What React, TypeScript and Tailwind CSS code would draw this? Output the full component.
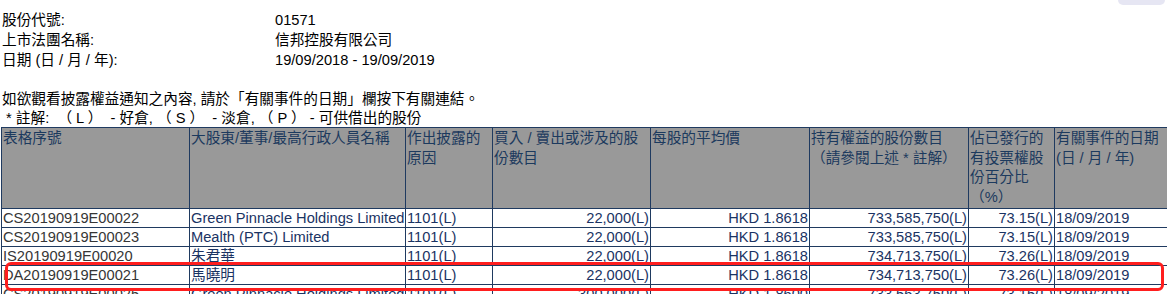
import React from "react";

const font = { fontFamily: '"Liberation Sans", Arial, "Noto Sans CJK TC", sans-serif' };

type Row = [string, string, string, string, string, string, string, string];

const rows: Row[] = [
  ["CS20190919E00022", "Green Pinnacle Holdings Limited", "1101(L)", "22,000(L)", "HKD 1.8618", "733,585,750(L)", "73.15(L)", "18/09/2019"],
  ["CS20190919E00023", "Mealth (PTC) Limited", "1101(L)", "22,000(L)", "HKD 1.8618", "733,585,750(L)", "73.15(L)", "18/09/2019"],
  ["IS20190919E00020", "朱君華", "1101(L)", "22,000(L)", "HKD 1.8618", "734,713,750(L)", "73.26(L)", "18/09/2019"],
  ["DA20190919E00021", "馬曉明", "1101(L)", "22,000(L)", "HKD 1.8618", "734,713,750(L)", "73.26(L)", "18/09/2019"],
  ["CS20190919E00025", "Green Pinnacle Holdings Limited", "1101(L)", "300,000(L)", "HKD 1.8600", "733,563,750(L)", "73.15(L)", "18/09/2019"],
];

const widths = [188, 216, 87, 158, 159, 159, 86, 116];
const align = ["text-left", "text-left", "text-left", "text-right", "text-right", "text-right", "text-right", "text-left"];

export default function App() {
  return (
    <div className="relative w-[1167px] h-[294px] overflow-hidden bg-white text-[14.67px] text-black" style={font}>
      <div className="absolute right-[2px] top-0 w-[47px] h-[5px] rounded-b-[5px] bg-[#e6e6f3]" />
      <div className="pt-[10px] pl-[2px]">
        <div className="flex h-[20px] items-center">
          <div className="w-[273px]">股份代號:</div>
          <div>01571</div>
        </div>
        <div className="flex h-[20px] items-center">
          <div className="w-[273px]">上市法團名稱:</div>
          <div>信邦控股有限公司</div>
        </div>
        <div className="flex h-[20px] items-center">
          <div className="w-[273px]">日期 (日 / 月 / 年):</div>
          <div>19/09/2018 - 19/09/2019</div>
        </div>
        <div className="mt-[19px] flex h-[19px] items-center whitespace-nowrap">
          如欲觀看披露權益通知之內容, 請於「有關事件的日期」欄按下有關連結。
        </div>
        <div className="flex h-[19px] items-center whitespace-nowrap">
          {"\u00a0* 註解: \u00a0（ L ） \u00a0- 好倉, （ S ） \u00a0- 淡倉, （ P ） - 可供借出的股份"}
        </div>
      </div>
      <table className="ml-px table-fixed border-collapse w-[1169px]">
        <colgroup>
          {widths.map((w, i) => (
            <col key={i} style={{ width: w }} />
          ))}
        </colgroup>
        <thead>
          <tr className="h-[81px] bg-[#999999] text-[#1c3a5e] leading-[19.5px] align-top">
            <th className="border border-[#1f3a60] px-px pt-px text-left font-normal">表格序號</th>
            <th className="border border-[#1f3a60] px-px pt-px text-left font-normal whitespace-nowrap">大股東/董事/最高行政人員名稱</th>
            <th className="border border-[#1f3a60] px-px pt-px text-left font-normal">作出披露的<br />原因</th>
            <th className="border border-[#1f3a60] px-px pt-px text-left font-normal whitespace-nowrap">買入 / 賣出或涉及的股<br />份數目</th>
            <th className="border border-[#1f3a60] px-px pt-px text-left font-normal">每股的平均價</th>
            <th className="border border-[#1f3a60] px-px pt-px text-left font-normal whitespace-nowrap">持有權益的股份數目<br />（請參閱上述 * 註解）</th>
            <th className="border border-[#1f3a60] px-px pt-px text-left font-normal whitespace-nowrap">佔已發行的<br />有投票權股<br />份百分比<br />（%）</th>
            <th className="border border-[#1f3a60] px-px pt-px text-left font-normal whitespace-nowrap">有關事件的日期<br />(日 / 月 / 年)</th>
          </tr>
        </thead>
        <tbody>
          {rows.map((r, ri) => (
            <tr key={ri} className="h-[19px] leading-[17px]">
              {r.map((c, ci) => (
                <td
                  key={ci}
                  className={`border border-[#1f3a60] px-px py-0 whitespace-nowrap overflow-hidden ${align[ci]} ${ci === 0 ? "text-[#363636]" : "text-[#1a3363]"}`}
                >
                  {c}
                </td>
              ))}
            </tr>
          ))}
        </tbody>
      </table>
      <div className="absolute left-[5px] top-[262px] w-[1159px] h-[29px] rounded-[6px] border-[3px] border-[#ff1e1e]" />
    </div>
  );
}
